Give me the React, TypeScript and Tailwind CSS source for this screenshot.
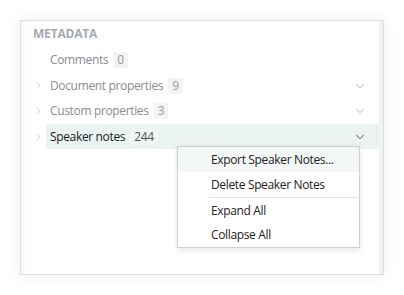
import { ChevronDown, ChevronRight } from 'lucide-react';

const FONT = { fontFamily: '"Open Sans", "Noto Sans", sans-serif' };

interface Row {
  label: string;
  count: number;
  expandable: boolean;
  active?: boolean;
}

const ROWS: Row[] = [
  { label: 'Comments', count: 0, expandable: false },
  { label: 'Document properties', count: 9, expandable: true },
  { label: 'Custom properties', count: 3, expandable: true },
  { label: 'Speaker notes', count: 244, expandable: true, active: true },
];

function MetaRow({ row, tall }: { row: Row; tall: boolean }) {
  return (
    <div className={`flex items-stretch ${tall ? 'h-[26px]' : 'h-[25px]'}`}>
      <div className="flex w-[25px] items-center pl-[12px]">
        {row.expandable && <ChevronRight size={11} strokeWidth={1.3} className="text-[#a8a8a8]" />}
      </div>
      <div className={`flex flex-1 items-center pl-[4px] pr-[12px] ${row.active ? 'bg-[#eaf3f1]' : ''}`}>
        <span className={`text-[12px] tracking-[-0.35px] ${row.active ? 'text-[#1b1b1b]' : 'text-[#8c8c8c]'}`}>
          {row.label}
        </span>
        <span
          className={`ml-[5px] rounded-[2px] px-[4px] text-[12px] leading-[16px] tracking-[-0.35px] ${
            row.active ? 'bg-[#f1f6f5] text-[#505050]' : 'bg-[#f3f3f3] text-[#9a9a9a]'
          }`}
        >
          {row.count}
        </span>
        <div className="flex-1" />
        {row.expandable && (
          <ChevronDown
            size={14}
            strokeWidth={1.3}
            className={row.active ? 'text-[#2b2b2b]' : 'text-[#a0a0a0]'}
          />
        )}
      </div>
    </div>
  );
}

function ContextMenu() {
  const item = 'flex items-center pl-[33px] text-[12px] tracking-[-0.35px] text-[#222]';
  return (
    <div className="absolute left-[156px] top-[125px] w-[183px] border border-[#cfcfcf] bg-white shadow-[0_2px_6px_rgba(0,0,0,0.1)]">
      <div className={`${item} h-[25px] bg-[#f3f7f6]`}>Export Speaker Notes...</div>
      <div className={`${item} h-[25px]`}>Delete Speaker Notes</div>
      <div className="ml-[31px] mr-[1px] h-px bg-[#e2e2e2]" />
      <div className={`${item} h-[25px]`}>Expand All</div>
      <div className={`${item} h-[24px]`}>Collapse All</div>
    </div>
  );
}

export default function App() {
  return (
    <div className="h-[295px] w-[404px] bg-white p-[20px]" style={FONT}>
      <div className="relative flex h-[255px] w-[364px] border border-[#dcdcdc] bg-white shadow-[0_0_14px_rgba(0,0,0,0.07)]">
        <div className="w-[4px] bg-[#fafafa]" />
        <div className="-ml-[4px] flex-1">
          <div className="flex h-[26px] items-center pl-[12px] text-[12px] font-bold tracking-[-0.2px] text-[#a6a9b3]">
            METADATA
          </div>
          {ROWS.map((r, i) => (
            <MetaRow key={r.label} row={r} tall={i % 2 === 0} />
          ))}
        </div>
        <div className="w-[4px] bg-[#f3f3f3]" />
        <ContextMenu />
      </div>
    </div>
  );
}
